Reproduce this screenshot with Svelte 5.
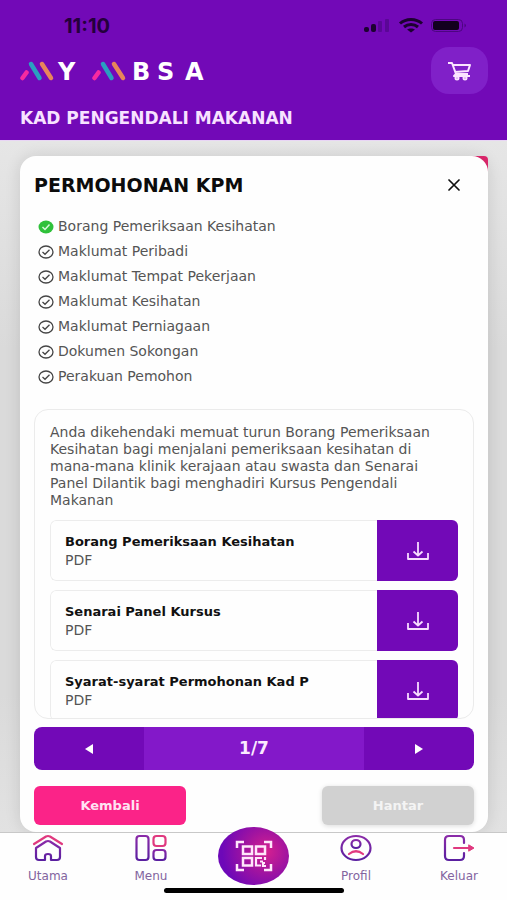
<script>
	const steps = [
		'Borang Pemeriksaan Kesihatan',
		'Maklumat Peribadi',
		'Maklumat Tempat Pekerjaan',
		'Maklumat Kesihatan',
		'Maklumat Perniagaan',
		'Dokumen Sokongan',
		'Perakuan Pemohon'
	];

	const files = [
		{ name: 'Borang Pemeriksaan Kesihatan', type: 'PDF' },
		{ name: 'Senarai Panel Kursus', type: 'PDF' },
		{ name: 'Syarat-syarat Permohonan Kad P', type: 'PDF' }
	];

	let page = $state(1);
</script>

<div class="app">
	<header>
		<div class="status">
			<span>11:10</span>
			<svg width="106" height="18" viewBox="0 0 106 18" aria-hidden="true">
				<g fill="#1c0230">
					<rect x="1" y="10" width="5" height="5" rx="2" />
					<rect x="8" y="7" width="5" height="8" rx="2" />
				</g>
				<g fill="#5a0796">
					<rect x="15" y="4" width="4" height="11" rx="1" />
					<rect x="22" y="2" width="4" height="13" rx="1" />
				</g>
				<g fill="none" stroke="#1c0230" stroke-width="3">
					<path d="M37 6.5C43 1 53 1 59 6.5" />
					<path d="M41 10C45 6.5 51 6.5 55 10" />
				</g>
				<path d="M44 12.5C46 11 50 11 52 12.5L48 15.5Z" fill="#1c0230" />
				<rect x="68.5" y="2.5" width="31" height="12" rx="4" fill="none" stroke="#4c0680" />
				<rect x="70" y="4" width="26" height="9" rx="2" fill="#12001f" />
				<path d="M101.5 6.5q3 2 0 4z" fill="#4c0680" />
			</svg>
		</div>
		<div class="brand">
			<svg width="192" height="32" viewBox="0 -6 192 32" role="img" aria-label="MY MBSA">
				<g fill="none" stroke-width="4.5" stroke-linecap="round">
					<path d="M2.5 17L6.5 11.500M74.5 17L78.5 11.5" stroke="#f72aa0" />
					<path d="M11 3L19.5 17M83 3L91.5 17" stroke="#2a9fc0" />
					<path d="M22 3L31 17M94 3L103 17" stroke="#e8855a" />
				</g>
				<g class="wordmark">
					<text x="38" y="19">Y</text>
					<text x="112 137 165" y="19">BSA</text>
				</g>
			</svg>
			<button class="cart" aria-label="Troli">
				<svg width="26" height="20" viewBox="0 0 26 20" fill="none" stroke="#fbe4ff" stroke-width="2" aria-hidden="true">
					<path d="M1 2H5L9 13H21M6 4H23L21 10L8 11M9 13L7 15H23" stroke-linejoin="round" />
					<circle cx="10" cy="17" r="1.5" />
					<circle cx="18" cy="17" r="1.5" />
				</svg>
			</button>
		</div>
		<h1>KAD PENGENDALI MAKANAN</h1>
	</header>

	<main>
		<section class="modal">
			<div class="title">
				<h2>PERMOHONAN KPM</h2>
				<button class="close" aria-label="Tutup">
					<svg width="14" height="12" viewBox="0 0 14 12" stroke="#111" stroke-width="1.7" stroke-linecap="round" aria-hidden="true">
						<path d="M2 1L12 11M12 1L2 11" />
					</svg>
				</button>
			</div>

			<ul class="steps">
				{#each steps as step, i}
					<li>
						<svg width="16" height="14" viewBox="0 0 16 14" fill="none" aria-hidden="true">
							{#if i < page}
								<ellipse cx="8" cy="7" rx="7.5" ry="6.5" fill="#2fc13a" />
								<path d="M4.5 7L7 9.5L11.5 4.5" stroke="#d9f8dc" stroke-width="1.5" />
							{:else}
								<ellipse cx="8" cy="7" rx="7" ry="6" stroke="#444" stroke-width="1.3" />
								<path d="M4.5 7L7 9.3L11.5 4.7" stroke="#444" stroke-width="1.3" />
							{/if}
						</svg>
						{step}
					</li>
				{/each}
			</ul>

			<div class="panel">
				<p>
					Anda dikehendaki memuat turun Borang Pemeriksaan Kesihatan bagi menjalani pemeriksaan
					kesihatan di mana-mana klinik kerajaan atau swasta dan Senarai Panel Dilantik bagi
					menghadiri Kursus Pengendali Makanan
				</p>
				{#each files as file}
					<div class="file">
						<div class="info">
							<strong>{file.name}</strong>
							<span>{file.type}</span>
						</div>
						<button aria-label="Muat turun {file.name}">
							<svg width="22" height="18" viewBox="0 0 22 18" fill="none" stroke="#f8dcff" stroke-width="1.8" stroke-linejoin="round" aria-hidden="true">
								<path d="M11 0V13M6.5 9.5L11 13.5L15.5 9.5M1 11V17H21V11" />
							</svg>
						</button>
					</div>
				{/each}
			</div>

			<div class="pager">
				<button aria-label="Sebelumnya" onclick={() => (page = Math.max(1, page - 1))}>
					<svg width="10" height="12" viewBox="0 0 10 12" aria-hidden="true"><path d="M9 1V11L1 6Z" fill="#fff" /></svg>
				</button>
				<span>{page}/7</span>
				<button aria-label="Seterusnya" onclick={() => (page = Math.min(7, page + 1))}>
					<svg width="10" height="12" viewBox="0 0 10 12" aria-hidden="true"><path d="M1 1V11L9 6Z" fill="#fff" /></svg>
				</button>
			</div>

			<div class="actions">
				<button class="back">Kembali</button>
				<button class="send" disabled>Hantar</button>
			</div>
		</section>
	</main>

	<nav>
		<svg class="defs" width="0" height="0" aria-hidden="true">
			<linearGradient id="duo" x1="0" y1="0" x2="0" y2="1">
				<stop offset="0" stop-color="#8a2ba8" />
				<stop offset="1" stop-color="#5a1fa0" />
			</linearGradient>
		</svg>
		<a href="#utama">
			<svg width="32" height="28" viewBox="0 0 32 28" fill="none" stroke-width="2.2" stroke-linecap="round" stroke-linejoin="round" aria-hidden="true">
				<path d="M2 10L14 2.5Q16 1.5 18 2.5L30 10" stroke="#e0397f" />
				<path d="M4 14L14 7.5Q16 6.5 18 7.5L28 14V23Q28 26 25 26H19V22Q19 20 16 20Q13 20 13 22V26H7Q4 26 4 23Z" stroke="url(#duo)" />
			</svg>
			<span>Utama</span>
		</a>
		<a href="#menu">
			<svg width="32" height="28" viewBox="0 0 32 28" fill="none" stroke-width="2.2" aria-hidden="true">
				<rect x="1.5" y="2" width="12" height="24" rx="3" stroke="url(#duo)" />
				<rect x="18.5" y="2" width="12" height="10" rx="3" stroke="#e0397f" />
				<rect x="18.5" y="16" width="12" height="10" rx="3" stroke="url(#duo)" />
			</svg>
			<span>Menu</span>
		</a>
		<a class="scan" href="#imbas" aria-label="Imbas kod QR">
			<svg width="38" height="32" viewBox="0 0 38 32" fill="none" stroke="#ffe6fb" stroke-width="2.5" aria-hidden="true">
				<path d="M2 8V2H9M29 2H36V8M2 24V30H9M29 30H36V24" />
				<rect x="8" y="6.500" width="9" height="7.5" />
				<rect x="21" y="6.500" width="9" height="7.5" />
				<rect x="8" y="18" width="9" height="7.5" />
				<path d="M27 18H21V25.5H26M25 21.5H28M30 17V20M30 23H28V26H31" stroke-width="2.2" />
			</svg>
		</a>
		<a href="#profil">
			<svg width="32" height="28" viewBox="0 0 32 28" fill="none" stroke-width="2.2" stroke-linecap="round" aria-hidden="true">
				<ellipse cx="16" cy="14" rx="14.5" ry="12" stroke="url(#duo)" />
				<ellipse cx="16" cy="10" rx="4.5" ry="4" stroke="url(#duo)" />
				<path d="M9 20Q16 14.5 23 20" stroke="#e0397f" />
			</svg>
			<span>Profil</span>
		</a>
		<a href="#keluar">
			<svg width="32" height="28" viewBox="0 0 32 28" fill="none" stroke-width="2.2" stroke-linecap="round" stroke-linejoin="round" aria-hidden="true">
				<path d="M21 9V6Q21 2 17 2H6Q2 2 2 6V22Q2 26 6 26H17Q21 26 21 22V19" stroke="url(#duo)" />
				<path d="M11 14H29" stroke="#e0397f" />
				<path d="M26 11L31 14L26 17Z" fill="#e0397f" stroke="#e0397f" stroke-width="1" />
			</svg>
			<span>Keluar</span>
		</a>
		<div class="home-bar"></div>
	</nav>
</div>

<style>
	:global(body) {
		margin: 0;
	}

	.app {
		display: flex;
		flex-direction: column;
		height: 100vh;
		font-family: 'DejaVu Sans', Inter, sans-serif;
		font-size: 14px;
		color: #555;
		background: #e4e4e4;
	}

	button {
		display: flex;
		align-items: center;
		justify-content: center;
		margin: 0;
		padding: 0;
		border: 0;
		background: none;
		font: inherit;
		cursor: pointer;
	}

	h1,
	h2,
	p,
	ul {
		margin: 0;
		padding: 0;
	}

	header {
		padding: 16px 19px 10px 20px;
		background: #7209b7;
		border-bottom: 1px solid #e9d5f5;
	}

	.status {
		display: flex;
		justify-content: space-between;
		align-items: center;
		height: 20px;
		padding: 0 19px 0 44px;
		color: #24003c;
		font-family: Inter, sans-serif;
		font-size: 20px;
		font-weight: 700;
	}

	.brand {
		display: flex;
		justify-content: space-between;
		align-items: center;
		margin-top: 11px;
	}

	.wordmark {
		fill: #fff;
		font-size: 24px;
		font-weight: 700;
	}

	.cart {
		width: 57px;
		height: 47px;
		border-radius: 18px;
		background: #8020c8;
	}

	h1 {
		margin-top: 12px;
		color: #f8e2ff;
		font-size: 17px;
		font-weight: 700;
		line-height: 24px;
	}

	main {
		position: relative;
		z-index: 0;
		display: flex;
		flex: 1;
		min-height: 0;
		padding: 15px 19px 0 20px;
		background: linear-gradient(#e6e6e6, #dadada 30%, #dadada 80%, #e2e2e2);
	}

	/* corner of the card that sits underneath */
	main::before {
		content: '';
		position: absolute;
		top: 15px;
		right: 19px;
		width: 24px;
		height: 24px;
		border-radius: 0 4px 0 0;
		background: #e0286e;
	}

	.modal {
		position: relative;
		display: flex;
		flex: 1;
		flex-direction: column;
		min-width: 0;
		padding: 14px 14px 7px;
		box-sizing: border-box;
		border-radius: 16px;
		background: #fefefe;
		box-shadow: 0 0 16px rgba(0, 0, 0, 0.12);
	}

	.title {
		display: flex;
		justify-content: space-between;
		align-items: center;
		height: 30px;
	}

	h2 {
		color: #0c0c0c;
		font-size: 19px;
		font-weight: 700;
	}

	.close {
		width: 40px;
		height: 30px;
	}

	.steps {
		margin: 14px 0 20px 4px;
		list-style: none;
	}

	.steps li {
		display: flex;
		align-items: center;
		gap: 4px;
		line-height: 25px;
	}

	.panel {
		flex: 1;
		min-height: 0;
		padding: 14px 15px 0;
		overflow-y: auto;
		scrollbar-width: none;
		border: 1px solid #ebebeb;
		border-radius: 14px;
	}

	p {
		margin-bottom: 11px;
		line-height: 17px;
	}

	.file {
		display: flex;
		height: 61px;
		margin-bottom: 9px;
		border-radius: 6px;
		overflow: hidden;
	}

	.info {
		display: flex;
		flex: 1;
		flex-direction: column;
		justify-content: center;
		min-width: 0;
		padding-left: 14px;
		border: 1px solid #ececec;
		border-right: 0;
		border-radius: 6px 0 0 6px;
		line-height: 19px;
	}

	.info strong {
		color: #111;
		font-size: 13px;
		font-weight: 700;
		white-space: nowrap;
	}

	.file button {
		width: 81px;
		background: #7209b7;
	}

	.pager {
		display: grid;
		grid-template-columns: 1fr 2fr 1fr;
		height: 43px;
		margin-top: 8px;
		border-radius: 8px;
		overflow: hidden;
		background: #7209b7;
	}

	.pager span {
		background: #8318c9;
		color: #fbe9ff;
		font-size: 17px;
		font-weight: 700;
		line-height: 43px;
		text-align: center;
	}

	.actions {
		display: flex;
		justify-content: space-between;
		margin-top: 16px;
	}

	.actions button {
		width: 152px;
		height: 39px;
		border-radius: 6px;
		font-size: 13px;
		font-weight: 700;
	}

	.back {
		background: #fb2388;
		color: #ffe3f3;
	}

	.send {
		background: #d1d1d1;
		color: #f4f4f4;
		box-shadow: 0 1px 5px rgba(0, 0, 0, 0.14);
	}

	nav {
		position: relative;
		display: flex;
		justify-content: space-between;
		height: 67px;
		padding: 0 18px;
		border-top: 1px solid #c8c8c8;
		background: #fefefe;
		z-index: 1;
	}

	nav a {
		display: flex;
		flex-direction: column;
		align-items: center;
		gap: 6px;
		width: 60px;
		padding-top: 1px;
		color: #83649f;
		font-size: 12px;
		line-height: 16px;
		text-decoration: none;
	}

	nav .scan {
		justify-content: center;
		width: 71px;
		height: 58px;
		margin: -6px -6px 0;
		padding: 0;
		border-radius: 50%;
		background: radial-gradient(circle at 68% 42%, #d6208f 0, #a3149f 35%, #6d08b8 75%);
	}

	.defs {
		position: absolute;
	}

	.home-bar {
		position: absolute;
		bottom: 7px;
		left: 50%;
		width: 180px;
		height: 5px;
		border-radius: 3px;
		background: #000;
		transform: translateX(-50%);
	}
</style>
